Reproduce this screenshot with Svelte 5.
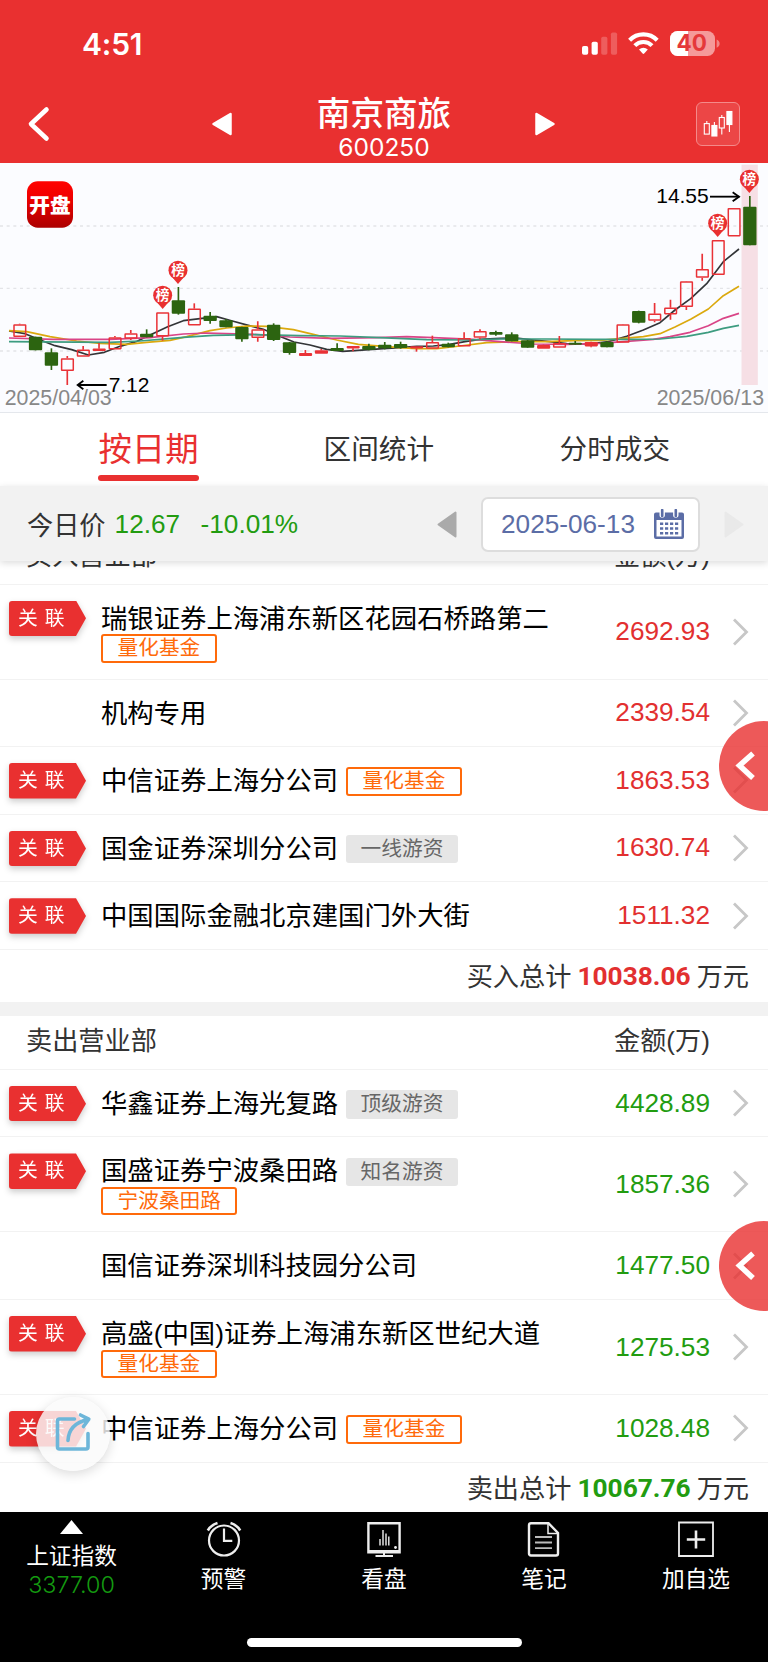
<script>
  const buys = [
    { name: '瑞银证券上海浦东新区花园石桥路第二', linked: true, below: '量化基金', amount: '2692.93' },
    { name: '机构专用', amount: '2339.54' },
    { name: '中信证券上海分公司', linked: true, fund: '量化基金', amount: '1863.53' },
    { name: '国金证券深圳分公司', linked: true, trader: '一线游资', amount: '1630.74' },
    { name: '中国国际金融北京建国门外大街', linked: true, amount: '1511.32' }
  ];
  const sells = [
    { name: '华鑫证券上海光复路', linked: true, trader: '顶级游资', amount: '4428.89' },
    { name: '国盛证券宁波桑田路', linked: true, trader: '知名游资', below: '宁波桑田路', amount: '1857.36' },
    { name: '国信证券深圳科技园分公司', amount: '1477.50' },
    { name: '高盛(中国)证券上海浦东新区世纪大道', linked: true, below: '量化基金', amount: '1275.53' },
    { name: '中信证券上海分公司', linked: true, fund: '量化基金', amount: '1028.48' }
  ];
  const sections = [
    { id: 'buy', title: '买入营业部', rows: buys, totalLabel: '买入总计', total: '10038.06' },
    { id: 'sell', title: '卖出营业部', rows: sells, totalLabel: '卖出总计', total: '10067.76' }
  ];

  // direction, high, body top, body bottom, low (chart units)
  const candles = [
    ['u',491,493,531,531],['d',530,530,571,571],['d',565,577,617,630],['u',588,595,633,675],
    ['u',558,569,590,590],['u',549,566,573,573],['u',528,532,568,568],['u',510,520,536,540],
    ['d',508,521,532,532],['u',457,457,529,542],['d',381,421,461,464],['u',430,446,496,496],
    ['d',456,467,483,491],['d',477,481,502,502],['d',500,501,538,545],['u',484,508,534,545],
    ['d',490,494,540,543],['d',546,547,579,584],['u',570,579,588,588],['u',567,571,581,581],
    ['d',550,564,573,573],['u',558,558,565,574],['d',551,558,569,571],['d',546,554,565,568],
    ['d',545,552,564,566],['u',559,559,565,575],['u',527,546,566,566],['d',548,551,562,562],
    ['u',517,534,559,559],['u',508,513,533,538],['d',512,516,524,527],['d',517,523,544,544],
    ['d',540,541,563,563],['u',554,555,566,566],['u',528,549,563,563],['d',543,548,554,554],
    ['u',545,546,559,562],['d',543,546,562,562],['u',492,493,548,548],['d',452,453,488,490],
    ['u',429,461,482,487],['u',419,443,463,479],['u',363,364,441,450],['u',281,327,353,362],
    ['u',240,240,345,345],['u',144,144,229,229],['d',108,140,256,256]
  ].map(([dir, high, top, bottom, low], i) => ({ dir, high, top, bottom, low, x: 59 + 47.62 * i }));

  const averages = [
    { color: '#333538', points: '27,513 75,521 123,541 165,557 215,569 265,585 313,577 360,559 408,545 455,523 503,500 550,482 600,476 650,470 697,483 745,496 790,508 835,527 882,546 930,555 980,568 1028,574 1075,571 1150,566 1200,563 1250,559 1300,558 1345,554 1395,545 1440,538 1500,535 1550,534 1600,540 1650,545 1700,551 1750,552 1790,549 1825,545 1880,529 1930,510 1980,488 2025,450 2072,416 2120,371 2170,305 2217,267' },
    { color: '#dba90e', points: '27,512 80,515 150,530 230,543 300,550 380,553 440,547 510,541 560,530 630,512 680,504 740,498 800,499 880,509 940,523 1010,540 1075,553 1150,559 1200,563 1250,566 1310,566 1380,558 1460,548 1560,545 1640,545 1720,542 1800,541 1870,535 1930,530 1980,521 2025,501 2072,478 2125,447 2170,407 2217,379' },
    { color: '#d94487', points: '27,534 160,538 330,538 450,533 550,522 620,519 760,523 870,531 990,535 1130,533 1220,530 1300,533 1420,538 1500,545 1600,552 1700,553 1800,550 1880,544 1960,538 2010,530 2070,517 2125,497 2170,475 2217,460' },
    { color: '#3d9c80', points: '27,545 330,547 420,543 550,532 640,526 760,524 900,527 1020,528 1140,533 1280,539 1400,540 1500,537 1640,537 1780,538 1900,538 1980,537 2060,529 2125,517 2170,505 2217,496' }
  ];
  const pins = [[488, 406], [534, 331], [2153, 190], [2248, 58]];
</script>

<div class="app">
  <header>
    <div class="status">
      <span class="clock">4:51</span>
      <svg class="indicators" width="140" height="28" viewBox="0 0 140 28">
        <g fill="#fff">
          <rect x="0" y="16" width="6.2" height="8.8" rx="1.8" />
          <rect x="9.6" y="11.8" width="6.2" height="13" rx="1.8" />
          <rect x="19.2" y="6.8" width="6.2" height="18" rx="1.8" opacity=".22" />
          <rect x="28.9" y="2.4" width="6.2" height="22.4" rx="1.8" opacity=".22" />
        </g>
        <g fill="none" stroke="#fff" stroke-width="4.1">
          <path d="M47.6 10.2a19.2 19.2 0 0 1 27.6 0" />
          <path d="M52.8 15.6a12 12 0 0 1 17.2 0" />
        </g>
        <path d="M57 19.4a6.6 6.6 0 0 1 8.8 0l-3.6 4.2q-.8.8-1.6 0z" fill="#fff" />
        <clipPath id="battery"><rect x="88" y="1" width="45" height="25" rx="7.6" /></clipPath>
        <g clip-path="url(#battery)">
          <rect x="88" y="1" width="45" height="25" fill="#f59a9a" />
          <rect x="88" y="1" width="18" height="25" fill="#fff" />
        </g>
        <path d="M134.6 9.4q3 1.2 3 4.2t-3 4.2z" fill="#f28585" />
        <text x="109.8" y="21.2" text-anchor="middle" class="charge">40</text>
      </svg>
    </div>
    <div class="titlebar">
      <svg width="24" height="38" viewBox="0 0 24 38"><path d="M19.5 4.5 4 19l15.500 14.500" fill="none" stroke="#fff" stroke-width="4.6" stroke-linecap="round" stroke-linejoin="round" /></svg>
      <svg width="24" height="26" viewBox="0 0 24 26"><path d="M20.500 3v20L3.500 13z" fill="#fff" stroke="#fff" stroke-width="2.500" stroke-linejoin="round" /></svg>
      <div class="stock"><h1>南京商旅</h1><span>600250</span></div>
      <svg width="24" height="26" viewBox="0 0 24 26"><path d="M3.500 3v20l17-10z" fill="#fff" stroke="#fff" stroke-width="2.500" stroke-linejoin="round" /></svg>
      <div class="kline">
        <svg width="44" height="44" viewBox="0 0 44 44" fill="none" stroke="#fff" stroke-width="1.1">
          <rect x="8.300" y="21.600" width="5" height="10.500" /><path d="M10.800 19v2.600" />
          <rect x="15.900" y="23.500" width="5" height="10.500" fill="#fff" /><path d="M18.400 20v3" />
          <rect x="23.300" y="15.500" width="5" height="10.500" /><path d="M25.800 13v2.500M25.800 26v6.500" />
          <rect x="30.900" y="9.500" width="5" height="13" fill="#fff" /><path d="M33.400 22v8" />
        </svg>
      </div>
    </div>
  </header>

  <svg class="chart" viewBox="0 9 2304 747">
    <defs>
      <linearGradient id="logo" x1="0" y1="0" x2="0" y2="1">
        <stop offset="0" stop-color="#ff0300" /><stop offset=".35" stop-color="#f00000" /><stop offset="1" stop-color="#ac0000" />
      </linearGradient>
    </defs>
    <g stroke="#e3e4e8" stroke-width="4" stroke-dasharray="9 11">
      <path d="M0 198H2304M0 385H2304M0 573H2304" />
    </g>
    <rect x="2224.500" y="14" width="49" height="661" fill="#f6dfe5" />
    <rect x="81" y="64" width="138" height="139" rx="32" fill="url(#logo)" />
    <text class="cjk brand" x="150" y="158" text-anchor="middle">开盘</text>
    {#each averages as line}
      <polyline points={line.points} fill="none" stroke={line.color} stroke-width="5" stroke-linejoin="round" />
    {/each}
    {#each candles as c}
      {#if c.dir === 'd'}
        <path d="M{c.x} {c.high}V{c.low}" stroke="#2c6410" stroke-width="5" />
        <rect x={c.x - 20} y={c.top} width="40" height={c.bottom - c.top} rx="3" fill="#2c6410" />
      {:else}
        <path d="M{c.x} {c.high}V{c.top}M{c.x} {c.bottom}V{c.low}" stroke="#e93237" stroke-width="5" />
        <rect x={c.x - 17} y={c.top + 2} width="35" height={c.bottom - c.top - 4} rx="1" fill={c.bottom - c.top > 13 ? 'none' : '#e93237'} stroke="#e93237" stroke-width="4.500" />
      {/if}
    {/each}
    {#each pins as [x, y]}
      <path d="M{x - 16} {y + 22}L{x} {y + 41}L{x + 16} {y + 22}z" fill="#e93030" />
      <circle cx={x} cy={y} r="28.500" fill="#e93030" />
      <text class="cjk pin" {x} y={y + 15} text-anchor="middle">榜</text>
    {/each}
    <g fill="none" stroke="#000" stroke-width="5.500">
      <path d="M320 675H234M250 662L233 675L250 688" />
      <path d="M990 110H1078" transform="translate(1140)" />
      <path d="M2198 97L2217 110L2198 124" />
    </g>
    <text class="price" x="326" y="696" textLength="122">7.12</text>
    <text class="price" x="1969" y="130" textLength="157">14.55</text>
    <text class="date" x="14" y="735" textLength="321">2025/04/03</text>
    <text class="date" x="1970" y="735" textLength="322">2025/06/13</text>
  </svg>

  <nav class="tabs">
    <span class="tab active">按日期</span>
    <span class="tab">区间统计</span>
    <span class="tab">分时成交</span>
  </nav>

  <div class="pricebar">
    <span class="label">今日价</span>
    <span class="quote">12.67</span>
    <span class="quote change">-10.01%</span>
    <svg class="prev" width="20" height="27" viewBox="0 0 20 27"><path d="M18.500 1.500v24L1.500 13.500z" fill="#aaa" stroke="#aaa" stroke-width="2" stroke-linejoin="round" /></svg>
    <div class="datebox">
      <span>2025-06-13</span>
      <svg width="32" height="31" viewBox="0 0 32 31">
        <path d="M3 3.500h3.500V6a2.700 2.700 0 0 0 5.400 0V3.500h8.200V6a2.700 2.700 0 0 0 5.400 0V3.500H29a2 2 0 0 1 2 2V28a2 2 0 0 1-2 2H3a2 2 0 0 1-2-2V5.500a2 2 0 0 1 2-2zM3.500 11v16.500h25V11z" fill="#5b6da6" fill-rule="evenodd" />
        <path d="M9.200 1v6M22.800 1v6" stroke="#5b6da6" stroke-width="2.600" stroke-linecap="round" />
        <path d="M7 14.800h18.500M7 19.500h18.500M7 24.200h18.500" stroke="#5b6da6" stroke-width="2.600" stroke-dasharray="3.200 1.800" />
      </svg>
    </div>
    <svg class="next" width="20" height="27" viewBox="0 0 20 27"><path d="M1.500 1.500v24l17-12z" fill="#e9e9e9" stroke="#e9e9e9" stroke-width="2" stroke-linejoin="round" /></svg>
  </div>

  <main>
    {#each sections as s}
      <section class={s.id}>
        <div class="head"><span>{s.title}</span><span>金额(万)</span></div>
        {#each s.rows as row}
          <div class="row" class:tall={row.below}>
            <div class="link">{#if row.linked}<span class="flag"><b>关 联</b></span>{/if}</div>
            <div class="broker">
              <div class="line">
                <span class="name">{row.name}</span>
                {#if row.fund}<span class="badge fund">{row.fund}</span>{/if}
                {#if row.trader}<span class="badge trader">{row.trader}</span>{/if}
              </div>
              {#if row.below}<span class="badge fund under">{row.below}</span>{/if}
            </div>
            <span class="amount">{row.amount}</span>
            <svg class="chevron" width="18" height="28" viewBox="0 0 18 28"><path d="M2 1.500 14.500 14 2 26.500" fill="none" stroke="#c7c7c7" stroke-width="2.800" /></svg>
          </div>
        {/each}
        <div class="total"><span>{s.totalLabel}</span><strong>{s.total}</strong><span>万元</span></div>
      </section>
    {/each}
  </main>

  <footer>
    <div class="items">
      <div class="item index">
        <svg width="23" height="14" viewBox="0 0 23 14"><path d="M11.500 0 23 14H0z" fill="#fff" /></svg>
        <span>上证指数</span>
        <em>3377.00</em>
      </div>
      <div class="item alarm">
        <svg width="36" height="36" viewBox="0 0 36 36" fill="none" stroke="#eee" stroke-width="2.200">
          <circle cx="18" cy="19.500" r="15" /><path d="M18 7.500v12.300h8.300" />
          <path d="M1.800 9.500Q5 4 11.500 2M34.200 9.500Q31 4 24.500 2" stroke-width="2.600" />
        </svg>
        <span>预警</span>
      </div>
      <div class="item watch">
        <svg width="36" height="36" viewBox="0 0 36 36" fill="none" stroke="#eee" stroke-width="2.400">
          <path d="M2.400 2.200h31.200v29H2.400z" /><path d="M2 30.500h32" stroke-width="3" />
          <path d="M18 31v3.500M9.500 35h17.500" stroke-width="2" />
          <path d="M14 18v6.500M17 9v15.500M20 12.500v12M22.800 15.500v9" stroke-width="1.400" />
          <circle cx="29.500" cy="26.500" r="1.400" fill="#eee" stroke="none" />
        </svg>
        <span>看盘</span>
      </div>
      <div class="item notes">
        <svg width="36" height="36" viewBox="0 0 36 36" fill="none" stroke="#eee" stroke-width="2.400">
          <path d="M5 2.200h17.500L32 12v20.500q0 2-2 2H5q-2 0-2-2V4.200q0-2 2-2z" />
          <path d="M22 3v9.500h9.500" stroke-width="1.500" />
          <path d="M9 16h17M9 21.500h17M9 27.200h17" stroke-width="1.800" stroke="#bbb" />
        </svg>
        <span>笔记</span>
      </div>
      <div class="item add">
        <svg width="36" height="36" viewBox="0 0 36 36" fill="none" stroke="#eee" stroke-width="1.800">
          <path d="M1 1.500h34v33.500H1z" /><path d="M18 9.500v18M8.800 18.500h18.400" stroke-width="2.600" />
        </svg>
        <span>加自选</span>
      </div>
    </div>
    <div class="home"></div>
  </footer>

  <div class="drawer one"><svg width="22" height="30" viewBox="0 0 22 30"><path d="M19 2.500 5.500 14.500 19 27" fill="none" stroke="#fff" stroke-width="5.500" /></svg></div>
  <div class="drawer two"><svg width="22" height="30" viewBox="0 0 22 30"><path d="M19 2.500 5.500 14.500 19 27" fill="none" stroke="#fff" stroke-width="5.500" /></svg></div>
  <div class="share">
    <svg width="38" height="40" viewBox="0 0 38 40" fill="none" stroke="#6db6d9" stroke-width="3.600" stroke-linejoin="round" stroke-linecap="round">
      <path d="M20.500 7H5.500q-2 0-2 2v26q0 2 2 2h26.500q2 0 2-2V21.500" />
      <path d="M14 28.500C14.500 19 20 10.500 34 7.500M26.500 3 34.800 7.200 29.500 14.500" />
    </svg>
  </div>
</div>

<style>
  :global(body) { margin: 0; background: #fff; }
  .app {
    position: relative; display: flex; flex-direction: column;
    width: 768px; height: 1662px; overflow: hidden; background: #fff; color: #333;
    font-family: "Liberation Sans", "Noto Sans CJK SC", sans-serif; font-size: 26.2px;
  }
  svg { display: block; flex: none; }
  header { flex: none; height: 163px; background: #e93030; color: #fff; }
  .status { display: flex; justify-content: space-between; align-items: center; height: 88px; padding: 0 46px 0 82px; }
  .clock { font: 600 30px/40px Inter, sans-serif; letter-spacing: -.2px; }
  .indicators { margin-top: 0; }
  .charge { font: 700 22.500px Inter, sans-serif; fill: #e5383a; }
  .titlebar { display: grid; grid-template-columns: 183px 74px 249px 163px 44px; align-items: center; height: 72px; padding-left: 27px; }
  .stock { display: flex; flex-direction: column; align-items: center; width: 200px; height: 72px; }
  h1 { margin: 3px 0 0; font: 500 33.600px/42px "Noto Sans CJK SC", sans-serif; }
  .stock span { font: 400 24.500px/26px Inter, sans-serif; margin-top: 1px; }
  .kline { width: 42px; height: 42px; border: 1px solid #f48a8a; border-radius: 6px; background: #ec4646; }
  .kline svg { margin: -1px; }

  .chart { flex: none; width: 768px; height: 249px; background: #fbfcff; border-bottom: 1.500px solid #e4e7ec; }
  .cjk { font-family: "Noto Sans CJK SC", sans-serif; fill: #fff; }
  .brand { font-size: 62px; font-weight: 900; }
  .pin { font-size: 41px; font-weight: 700; }
  .price { font-size: 63px; fill: #000; }
  .date { font-size: 64px; fill: #888; }

  .tabs { display: grid; grid-template-columns: 297px 163px 210px; flex: none; height: 72.500px; }
  .tab { display: flex; justify-content: center; font-size: 27.600px; line-height: 73px; white-space: nowrap; }
  .tab:nth-child(2) { justify-content: flex-end; margin-right: 26px; }
  .tab:nth-child(3) { justify-content: flex-end; }
  .tab.active { position: relative; color: #e93030; font-size: 33.400px; }
  .active::after { content: ""; position: absolute; left: 98px; bottom: 5px; width: 101px; height: 6px; border-radius: 3px; background: #e93030; }

  .pricebar {
    position: relative; z-index: 1; flex: none; display: flex; align-items: center; box-sizing: border-box;
    height: 75px; padding: 2px 24px 0 27px; background: #f2f2f2; box-shadow: 0 2px 7px rgba(0, 0, 0, .14);
  }
  .quote { margin-left: 9px; color: #229c10; font-size: 26.200px; white-space: nowrap; width: 65px; }
  .change { margin-left: 21px; width: auto; }
  .prev { margin-left: auto; }
  .datebox {
    display: flex; align-items: center; justify-content: space-between; box-sizing: border-box;
    width: 219px; height: 55px; margin: 0 24px; padding: 0 13px 0 18px;
    border: 2px solid #ddd; border-radius: 7px; background: #fff; color: #5b6da6;
  }

  main { flex: none; height: 980.500px; margin-top: -29.500px; overflow: hidden; }
  .head { display: flex; justify-content: space-between; box-sizing: border-box; height: 53.500px; padding: 0 58px 0 26px; border-bottom: 1.500px solid #f2f2f2; line-height: 50px; }
  .row {
    display: grid; grid-template-columns: 101px 1fr auto 58px; box-sizing: border-box;
    height: 67.600px; border-bottom: 1.500px solid #f2f2f2; align-items: center; color: #000;
  }
  .row.tall { height: 95px; }
  .link { align-self: start; padding: 16px 0 0 9px; }
  .flag { display: block; width: 77px; filter: drop-shadow(0 3px 3px rgba(0, 0, 0, .2)); }
  .flag b {
    display: block; height: 35.500px; padding-left: 9px; border-radius: 3px 0 0 3px; background: #e93030;
    color: #fff; font-size: 19.800px; font-weight: 400; line-height: 35px; word-spacing: 1.500px; white-space: pre;
    clip-path: polygon(0 0, 67px 0, 100% 50%, 67px 100%, 0 100%);
  }
  .broker { align-self: start; padding-top: 15px; }
  .line { display: flex; align-items: center; height: 36px; white-space: nowrap; }
  .name { font-size: 26.350px; line-height: 36px; padding-top: 2px; }
  .badge { display: inline-block; box-sizing: border-box; height: 28.500px; padding: 0 14.500px; border-radius: 3px; font-size: 20.700px; line-height: 27px; white-space: nowrap; }
  .line .badge { margin: 3px 0 0 8px; }
  .fund { border: 1.500px solid #ff6a0a; border-width: 2px; color: #ff6a0a; line-height: 24px; }
  .trader { background: #e6e6e6; color: #666; }
  .under { display: block; width: max-content; margin-top: -1.500px; }
  .amount { text-align: right; }
  .buy .amount, .buy strong { color: #e23030; }
  .sell .amount, .sell strong { color: #229c10; }
  .chevron { margin-left: 22px; }
  .total { display: flex; justify-content: flex-end; align-items: center; box-sizing: border-box; height: 52.500px; padding: 0 19px 3px 0; }
  strong { margin: 0 6px; padding-top: 2px; font: 700 26.300px/34px Roboto, sans-serif; }
  .buy { border-bottom: 14px solid #f2f2f2; }

  footer { position: relative; flex: none; height: 150px; box-sizing: border-box; background: #000; color: #fff; padding-top: 8px; }
  .items { display: grid; grid-template-columns: 143px 161px 160px 160px 144px; height: 118px; }
  .item { display: flex; flex-direction: column; align-items: center; font-size: 22.700px; line-height: 28px; }
  .item span { margin-top: 8px; white-space: nowrap; }
  .item svg { margin-top: 1px; }
  .index svg { margin-top: 0; }
  .index span { margin-top: 8.500px; }
  em { margin-top: 1px; font: 300 23.300px/28px Inter, sans-serif; color: #149a10; }
  .home { width: 275px; height: 9.500px; margin: 0 auto; border-radius: 5px; background: #fff; }

  .drawer { position: absolute; left: 719px; width: 90px; height: 90px; border-radius: 50%; background: rgba(232, 48, 48, .8); z-index: 2; }
  .drawer svg { margin: 30px 0 0 15px; }
  .one { top: 721px; }
  .two { top: 1221px; }
  .share {
    position: absolute; z-index: 2; left: 36px; top: 1397px; width: 74px; height: 74px; border-radius: 50%;
    display: flex; align-items: center; justify-content: center; background: rgba(250, 250, 250, .82); box-shadow: 0 3px 12px rgba(0, 0, 0, .15);
  }
  .share svg { margin-top: -4px; }
</style>
